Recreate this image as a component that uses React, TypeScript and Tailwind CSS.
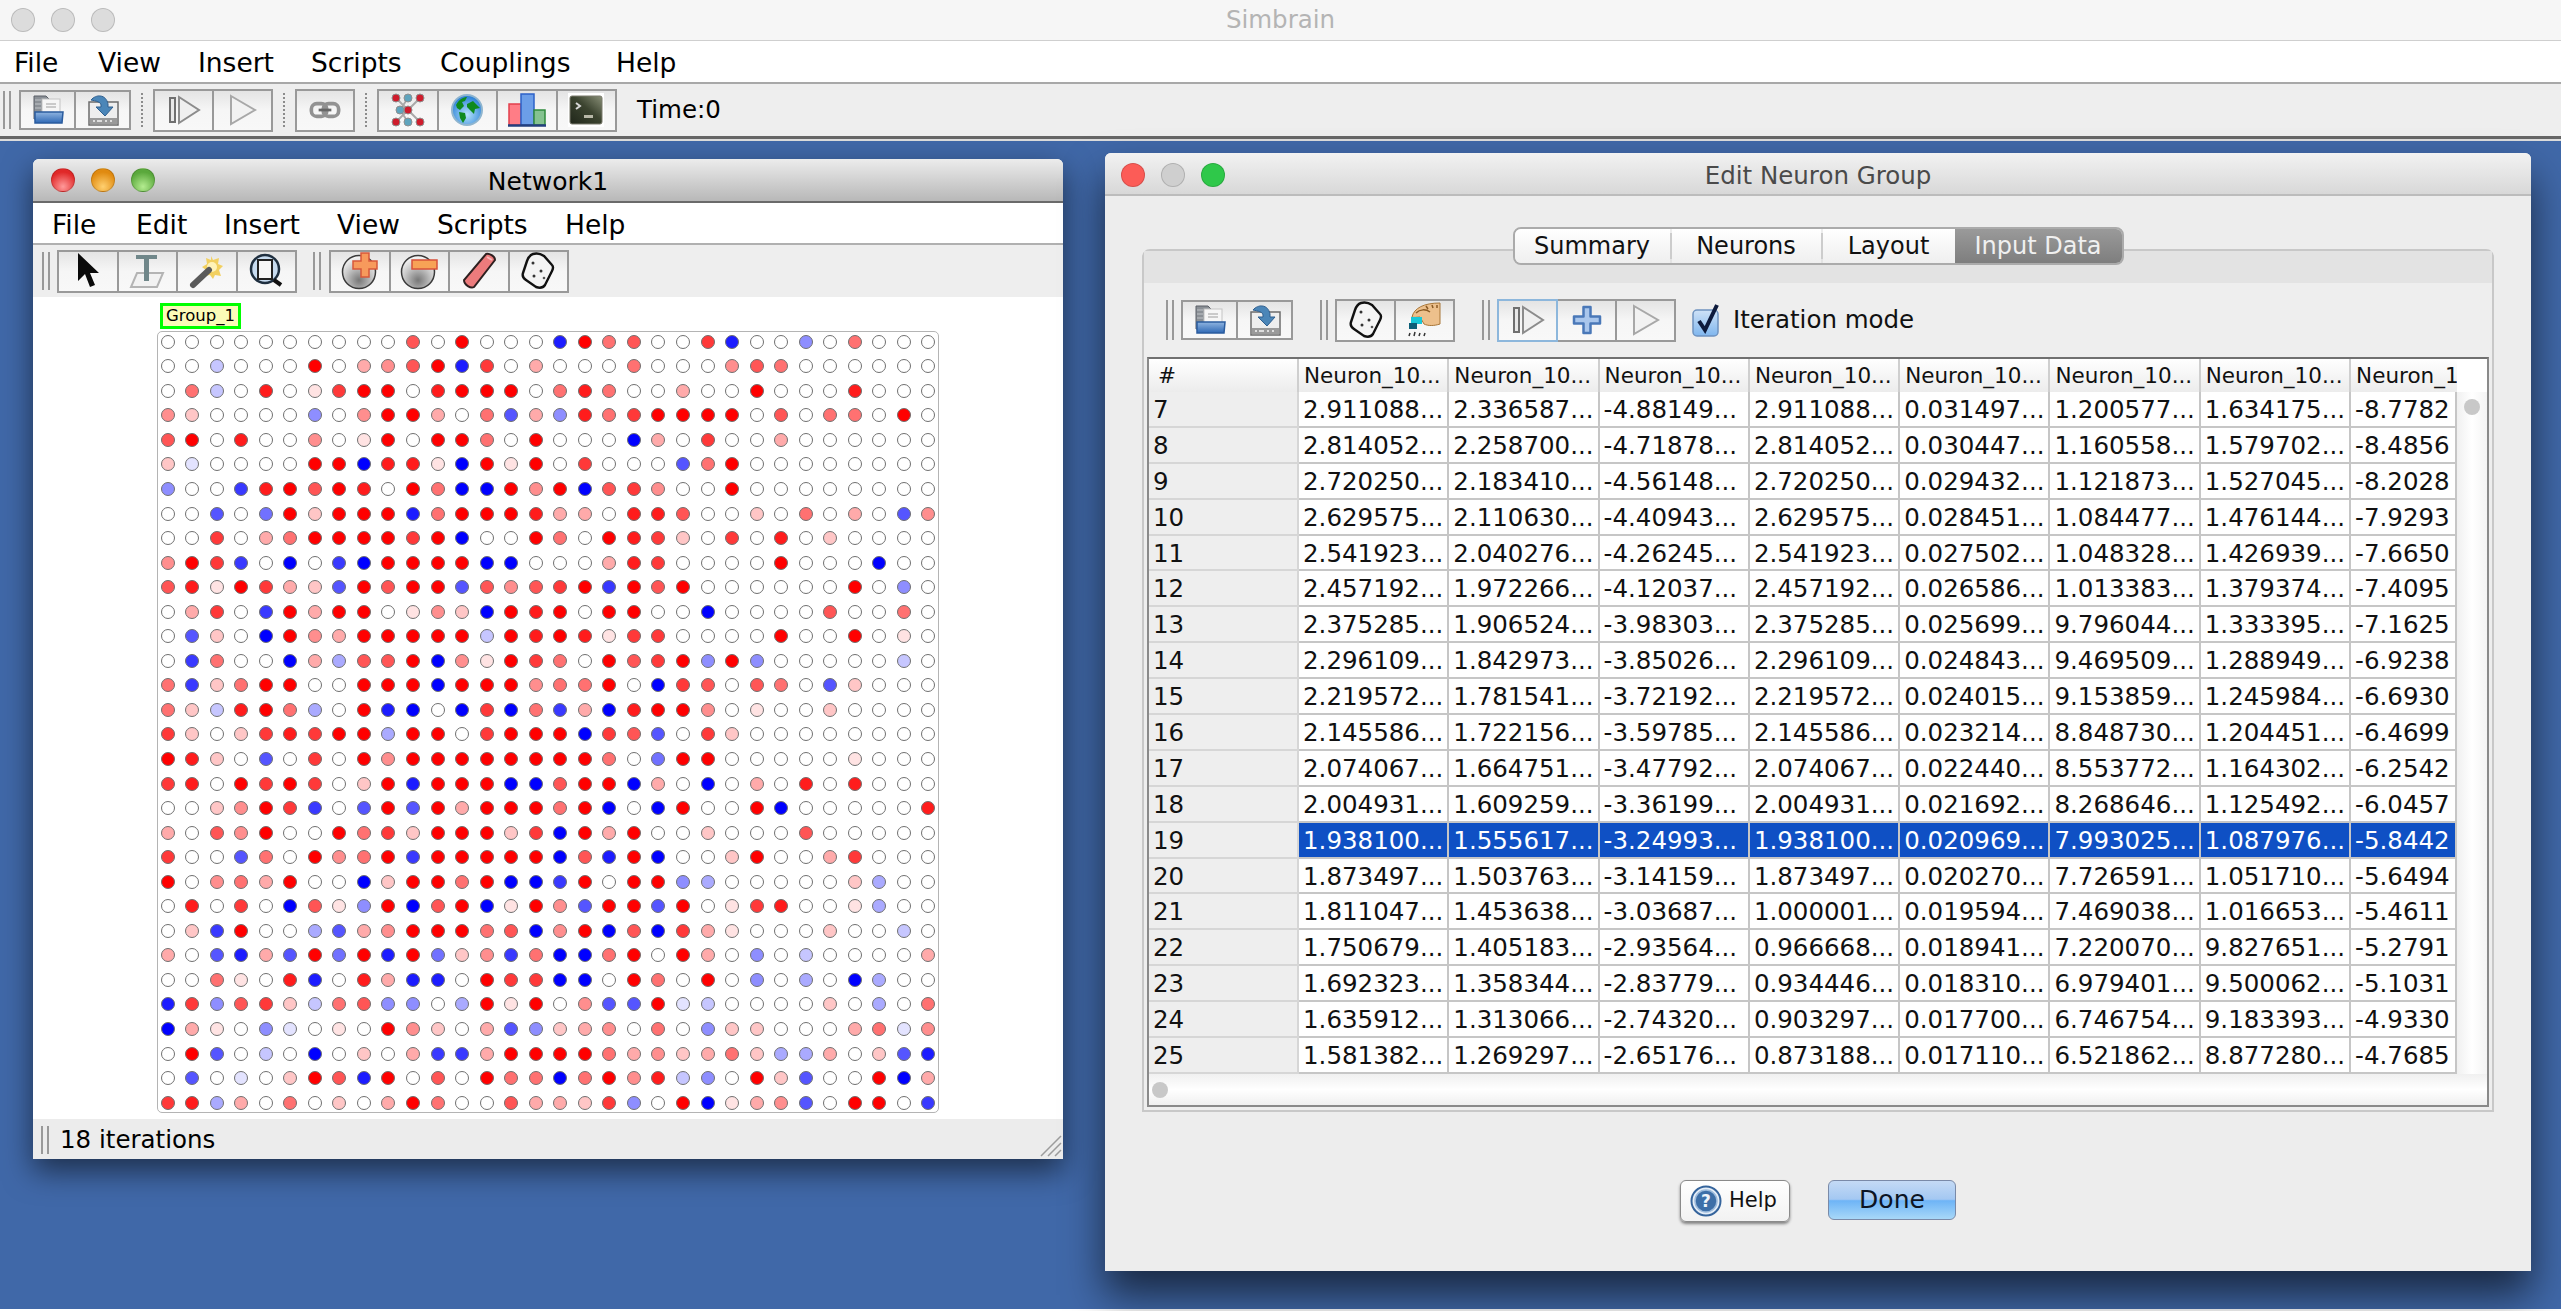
import type { ReactNode } from "react";

const FONT = "font-['DejaVu_Sans',sans-serif]";

const GRID = [
  "0000000000 609000h956 007h00d05000",
  "00b0009034 69h7030005 000465000000",
  "05b0801799 0899905850 030090008000",
  "420000d049 9305f3d857 999906055090",
  "6908004019 099509000i 307003000000",
  "2a000099i8 81i9190700 0f5900000000",
  "d00g896980 95ii949i67 400900000000",
  "00f0e92999 h599983308 8600205030f4",
  "0070359999 79i0095098 720708020000",
  "497g0i0gi9 999ii00038 700009000i00",
  "6819732f96 99f64679g9 6900000090d0",
  "0370g93990 142i989099 00i000060050",
  "0f20i94399 999b989817 700009009010",
  "0g500i3c66 9i41975096 79d9d00000b0",
  "5g25990099 9i99945590 i760650f2000",
  "52b895c09h i0i7i5g3i8 994010020000",
  "720278799c 9907999i76 f07200000000",
  "9820f07094 9999999950 e99000001000",
  "7809797029 h999ii699i 30i030808000",
  "002497g0f9 f9399959i0 i9009i000008",
  "3064900957 299927i939 002000600000",
  "700f509459 g99999i6h9 i00290037000",
  "90453900i2 9959iig909 9dc000002c00",
  "08070i61d9 i69i194f99 f90178001c00",
  "02g900cf34 99956i49i6 i731000200b0",
  "30fh3f9e9h 9e24g5ii59 0930d0b00003",
  "005108h083 hh0977ii09 5090d0c0ic00",
  "h7d672b56d d0c91904ff 9ab000020c05",
  "i310da0109 4203fd2340 50d2200035a4",
  "09f0b0i020 3gg3999953 42352cc302fh",
  "0f0a0296h9 060955i594 8bd092f009i3",
  "78c3050203 950063327d 09i134f0990g",
];

const ROWS: [string, string[]][] = [
  ["7", ["2.911088", "2.336587", "-4.88149", "2.911088", "0.031497", "1.200577", "1.634175", "-8.7782"]],
  ["8", ["2.814052", "2.258700", "-4.71878", "2.814052", "0.030447", "1.160558", "1.579702", "-8.4856"]],
  ["9", ["2.720250", "2.183410", "-4.56148", "2.720250", "0.029432", "1.121873", "1.527045", "-8.2028"]],
  ["10", ["2.629575", "2.110630", "-4.40943", "2.629575", "0.028451", "1.084477", "1.476144", "-7.9293"]],
  ["11", ["2.541923", "2.040276", "-4.26245", "2.541923", "0.027502", "1.048328", "1.426939", "-7.6650"]],
  ["12", ["2.457192", "1.972266", "-4.12037", "2.457192", "0.026586", "1.013383", "1.379374", "-7.4095"]],
  ["13", ["2.375285", "1.906524", "-3.98303", "2.375285", "0.025699", "9.796044", "1.333395", "-7.1625"]],
  ["14", ["2.296109", "1.842973", "-3.85026", "2.296109", "0.024843", "9.469509", "1.288949", "-6.9238"]],
  ["15", ["2.219572", "1.781541", "-3.72192", "2.219572", "0.024015", "9.153859", "1.245984", "-6.6930"]],
  ["16", ["2.145586", "1.722156", "-3.59785", "2.145586", "0.023214", "8.848730", "1.204451", "-6.4699"]],
  ["17", ["2.074067", "1.664751", "-3.47792", "2.074067", "0.022440", "8.553772", "1.164302", "-6.2542"]],
  ["18", ["2.004931", "1.609259", "-3.36199", "2.004931", "0.021692", "8.268646", "1.125492", "-6.0457"]],
  ["19", ["1.938100", "1.555617", "-3.24993", "1.938100", "0.020969", "7.993025", "1.087976", "-5.8442"]],
  ["20", ["1.873497", "1.503763", "-3.14159", "1.873497", "0.020270", "7.726591", "1.051710", "-5.6494"]],
  ["21", ["1.811047", "1.453638", "-3.03687", "1.000001", "0.019594", "7.469038", "1.016653", "-5.4611"]],
  ["22", ["1.750679", "1.405183", "-2.93564", "0.966668", "0.018941", "7.220070", "9.827651", "-5.2791"]],
  ["23", ["1.692323", "1.358344", "-2.83779", "0.934446", "0.018310", "6.979401", "9.500062", "-5.1031"]],
  ["24", ["1.635912", "1.313066", "-2.74320", "0.903297", "0.017700", "6.746754", "9.183393", "-4.9330"]],
  ["25", ["1.581382", "1.269297", "-2.65176", "0.873188", "0.017110", "6.521862", "8.877280", "-4.7685"]],
];

const TABLE_COLS = "grid grid-cols-[150px_repeat(7,150.3px)_106px]";

function dotColor(code: string) {
  if (code === "0") return "#ffffff";
  const isBlue = code >= "a";
  const level = isBlue ? code.charCodeAt(0) - 96 : Number(code);
  const v = Math.round(255 * (1 - level / 9));
  return isBlue ? `rgb(${v},${v},255)` : `rgb(255,${v},${v})`;
}

/* Icons */
function OpenIcon() {
  return (
    <svg width="34" height="32" viewBox="0 0 34 32">
      <defs>
        <linearGradient id="folderFill" x1="0" y1="0" x2="0" y2="1">
          <stop offset="0" stopColor="#8fb4e0" />
          <stop offset="1" stopColor="#2f69b5" />
        </linearGradient>
      </defs>
      <path d="M3 2h12l3 3v20H3z" fill="#8b9096" stroke="#5a5f66" />
      <path d="M4 6h6M4 10h6M4 14h6" stroke="#c0c4c8" />
      <rect x="11" y="5" width="18" height="16" fill="#f6f6f6" stroke="#c4c4c4" />
      <path d="M15 10h10M15 13h10" stroke="#bcbcbc" strokeWidth="1.5" />
      <path d="M4 18h28l-1 11H4z" fill="url(#folderFill)" stroke="#2b5c9e" strokeWidth="1.5" />
    </svg>
  );
}

function SaveIcon() {
  return (
    <svg width="34" height="34" viewBox="0 0 34 34">
      <rect x="3" y="9" width="29" height="23" fill="#eeeeee" stroke="#6c6c6c" strokeWidth="1.5" />
      <rect x="4" y="25" width="27" height="6" fill="#9a9a9a" />
      <path d="M7 28h2M11 28h5M19 28h2M24 28h2" stroke="#dedede" strokeWidth="2" />
      <path d="M5 7C10 1 20 1 22 11v3h5l-8 9-9-9h5v-2C15 9 10 8 5 7z" fill="#4b86b8" stroke="#2f5f8f" />
    </svg>
  );
}

function StepIcon() {
  return (
    <svg width="36" height="32" viewBox="0 0 36 32">
      <rect x="4" y="4" width="5" height="24" fill="#e8e8e8" stroke="#6f6f6f" strokeWidth="2" />
      <path d="M13 3l20 13-20 13z" fill="#f0f0f0" stroke="#8c8c8c" strokeWidth="2" />
    </svg>
  );
}

function PlayIcon() {
  return (
    <svg width="32" height="34" viewBox="0 0 32 34">
      <path d="M4 3l24 14L4 31z" fill="#f2f2f2" stroke="#a8a8a8" strokeWidth="2" />
    </svg>
  );
}

function LinkIcon() {
  return (
    <svg width="32" height="20" viewBox="0 0 34 22">
      <rect x="2" y="4" width="17" height="14" rx="6" fill="none" stroke="#929292" strokeWidth="4" />
      <rect x="15" y="4" width="17" height="14" rx="6" fill="none" stroke="#929292" strokeWidth="4" />
      <path d="M10 11h14" stroke="#666" strokeWidth="3" />
    </svg>
  );
}

function NetIcon() {
  const red = [[6, 5], [30, 5], [18, 17], [6, 29], [30, 29]];
  const teal = [[18, 5], [10, 17], [18, 29]];
  return (
    <svg width="36" height="34" viewBox="0 0 36 34">
      <path d="M6 5L30 29M30 5L6 29M18 5L10 17L18 29" stroke="#a9a9a9" strokeWidth="2" fill="none" />
      {red.map(([x, y]) => (
        <circle key={`${x}-${y}`} cx={x} cy={y} r="4" fill="#cf1c2c" stroke="#8f8f8f" />
      ))}
      {teal.map(([x, y]) => (
        <circle key={`${x}-${y}`} cx={x} cy={y} r="4" fill="#5fa4bd" stroke="#8f8f8f" />
      ))}
    </svg>
  );
}

function GlobeIcon() {
  return (
    <svg width="34" height="36" viewBox="0 0 34 36">
      <defs>
        <radialGradient id="globeSea" cx="0.5" cy="0.65" r="0.6">
          <stop offset="0" stopColor="#b4e2fb" />
          <stop offset="1" stopColor="#2d82d8" />
        </radialGradient>
      </defs>
      <circle cx="17" cy="18" r="15" fill="url(#globeSea)" stroke="#8fb5cf" strokeWidth="2" />
      <path d="M6 13c3-6 8-8 11-8l-2 4-3 1 2 4-4 4-3-2zM17 12l6-3 5 5 2 2-5 1-1 5-4-4-3-3zM9 20l6 1 1 5-3 5-3-5z" fill="#0e8a1e" />
    </svg>
  );
}

function BarsIcon() {
  return (
    <svg width="38" height="34" viewBox="0 0 38 34">
      <rect x="1" y="11" width="12" height="21" fill="#ff7d86" stroke="#e23f4c" strokeWidth="1.5" />
      <rect x="13" y="1" width="13" height="31" fill="#6c9ee8" stroke="#2d62c8" strokeWidth="1.5" />
      <rect x="26" y="17" width="11" height="15" fill="#85c290" stroke="#2f8a3c" strokeWidth="1.5" />
      <path d="M0 32.5h38" stroke="#24407e" strokeWidth="2.5" />
    </svg>
  );
}

function TermIcon() {
  return (
    <svg width="36" height="34" viewBox="0 0 36 34">
      <defs>
        <linearGradient id="termFill" x1="0" y1="1" x2="1" y2="0">
          <stop offset="0" stopColor="#20261a" />
          <stop offset="0.55" stopColor="#3c4430" />
          <stop offset="1" stopColor="#8a9078" />
        </linearGradient>
      </defs>
      <rect x="0" y="0" width="36" height="34" fill="#ffffff" />
      <rect x="2" y="3" width="32" height="28" rx="2" fill="url(#termFill)" stroke="#7a7a6c" />
      <path d="M8 10l4 3-4 3" fill="none" stroke="#d8d8d8" strokeWidth="2" />
      <rect x="16" y="22" width="9" height="3" fill="#b8b8a8" />
    </svg>
  );
}

function ArrowIcon() {
  return (
    <svg width="24" height="38" viewBox="0 0 24 38">
      <path d="M2 1v28l7-7 5 13 5-2-5-12h9z" fill="#0a0a0a" />
    </svg>
  );
}

function TextIcon() {
  return (
    <svg width="36" height="36" viewBox="0 0 36 36">
      <path d="M8 20h26l-6 14H2z" fill="#f2f2f2" stroke="#b4b4b4" strokeWidth="2" />
      <path d="M7 2h21v4h-8v22h-5V6H7z" fill="#70878a" />
    </svg>
  );
}

function WandIcon() {
  return (
    <svg width="36" height="36" viewBox="0 0 36 36">
      <path d="M22 3l2 4 6-2-1 6 5 2-4 4 2 6-6-1-2 4-3-4-6 1 2-6-4-3 5-3-1-6 5 2z" fill="#f2d060" />
      <circle cx="23" cy="14" r="5" fill="#fff3b8" />
      <path d="M4 32L20 17" stroke="#5a5a5a" strokeWidth="6" strokeLinecap="round" />
    </svg>
  );
}

function ZoomIcon() {
  return (
    <svg width="34" height="36" viewBox="0 0 34 36">
      <circle cx="16" cy="16" r="14" fill="#c8dcf0" stroke="#1f2f3f" strokeWidth="2.5" />
      <rect x="9" y="7" width="14" height="19" fill="#f7f7f7" stroke="#222" strokeWidth="2" />
      <path d="M25 27l7 5" stroke="#111" strokeWidth="4" />
    </svg>
  );
}

function NeuronBall({ id, children }: { id: string; children: ReactNode }) {
  return (
    <svg width="38" height="38" viewBox="0 0 38 38">
      <defs>
        <radialGradient id={id} cx="0.5" cy="0.75" r="0.7">
          <stop offset="0" stopColor="#777777" />
          <stop offset="0.6" stopColor="#c8c8c8" />
          <stop offset="1" stopColor="#f4f4f4" />
        </radialGradient>
      </defs>
      <circle cx="18" cy="20" r="16.5" fill={`url(#${id})`} stroke="#3a3a3a" strokeWidth="1.5" />
      {children}
    </svg>
  );
}

function AddNeuronIcon() {
  return (
    <NeuronBall id="ballAdd">
      <path d="M20 1h8v8h8v8h-8v8h-8v-8h-8V9h8z" fill="#f79a5c" stroke="#d8583a" strokeWidth="1.5" />
    </NeuronBall>
  );
}

function RemoveNeuronIcon() {
  return (
    <NeuronBall id="ballRemove">
      <rect x="12" y="8" width="25" height="9" fill="#f7a256" stroke="#d8503a" strokeWidth="1.5" />
    </NeuronBall>
  );
}

function EraserIcon() {
  return (
    <svg width="36" height="38" viewBox="0 0 36 38">
      <path d="M25 2c3-1 9 2 9 6L13 35c-3 2-10-2-10-7z" fill="#ec7b7c" stroke="#2e2020" strokeWidth="2" />
      <path d="M26 5l5 3" stroke="#f7b7b7" strokeWidth="2" />
    </svg>
  );
}

function DiceIcon() {
  return (
    <svg width="36" height="38" viewBox="0 0 36 38">
      <path d="M13 2c4-1 8 0 11 2l8 9c2 2 1 4 0 6l-7 14c-2 3-6 3-9 2L6 28c-3-2-4-4-3-7l4-12c1-3 3-6 6-7z" fill="#f4f4f4" stroke="#111" strokeWidth="2.4" />
      <circle cx="13" cy="11" r="1.5" fill="#333" />
      <circle cx="21" cy="19" r="1.5" fill="#333" />
      <circle cx="14" cy="24" r="1.5" fill="#333" />
      <circle cx="24" cy="26" r="1.3" fill="#555" />
    </svg>
  );
}

function HandIcon() {
  return (
    <svg width="38" height="36" viewBox="0 0 38 36">
      <path d="M6 15C8 6 18 1 34 1v21c-6 2-12 2-16 0l-4-7c-3 0-6 1-8 0z" fill="#edc08c" stroke="#a87638" />
      <path d="M10 11c4-4 10-4 14-1M20 4l2 3M26 3l1 3M31 3v3" stroke="#8a5a24" strokeWidth="1.5" fill="none" />
      <rect x="5" y="15" width="11" height="7" fill="#18c8d8" />
      <rect x="3" y="21" width="8" height="6" fill="#0d5f78" />
      <path d="M3 34l1-3M8 34l1-4M13 34l1-3M18 34l1-3" stroke="#333" strokeWidth="1.5" />
    </svg>
  );
}

function PlusIcon() {
  return (
    <svg width="30" height="30" viewBox="0 0 30 30">
      <path d="M11.5 2h7v9.5H28v7h-9.5V28h-7v-9.5H2v-7h9.5z" fill="#a9c6ec" stroke="#4a78b8" strokeWidth="2.5" strokeLinejoin="round" />
    </svg>
  );
}

function HelpIcon() {
  return (
    <svg width="32" height="32" viewBox="0 0 32 32">
      <circle cx="16" cy="16" r="14.5" fill="#e4edf7" stroke="#35649c" strokeWidth="2" />
      <circle cx="16" cy="16" r="11" fill="#3d6fa8" stroke="#9dbbdc" strokeWidth="1.5" />
      <text x="16" y="22" textAnchor="middle" fontSize="17" fontWeight="700" fill="#f0f4fa" fontFamily="DejaVu Sans">?</text>
    </svg>
  );
}

/* Toolbar pieces */
function Grip({ h = "h-[38px]" }: { h?: string }) {
  return (
    <div className={`flex ${h} w-[8px] shrink-0 justify-between`}>
      <div className="w-[2px] bg-[#999999]" />
      <div className="w-[2px] bg-[#999999]" />
    </div>
  );
}

function DottedSep() {
  return <div className="h-[34px] w-0 shrink-0 border-l-[2px] border-dotted border-[#8c8c8c]" />;
}

function ToolGroup({ children, h = "h-[43px]" }: { children: ReactNode; h?: string }) {
  return <div className={`flex ${h} shrink-0 gap-[2px] border-[2px] border-[#999999] bg-[#999999]`}>{children}</div>;
}

function ToolBtn({ children, w = "w-[57.5px]", active }: { children: ReactNode; w?: string; active?: boolean }) {
  return (
    <div
      className={`flex ${w} items-center justify-center overflow-hidden bg-gradient-to-b from-[#e4e4e4] via-[#f6f6f6] to-[#f8f8f8] ${
        active ? "outline-[2px] outline-[#8db7dc]" : ""
      }`}
    >
      {children}
    </div>
  );
}

function Lights({ kind }: { kind: "off" | "glossy" | "flat" }) {
  const colors =
    kind === "off"
      ? ["bg-[#dcdcdc]", "bg-[#dcdcdc]", "bg-[#dcdcdc]"]
      : kind === "flat"
        ? ["bg-[#fc5c57]", "bg-[#cfcfcf]", "bg-[#2fc84a]"]
        : [
            "bg-[radial-gradient(circle_at_50%_80%,#ff9a9a,#e02828_70%)]",
            "bg-[radial-gradient(circle_at_50%_80%,#ffd070,#e08a10_70%)]",
            "bg-[radial-gradient(circle_at_50%_80%,#b4ec90,#5aa83c_70%)]",
          ];
  return (
    <div className="flex gap-[16px]">
      {colors.map((c, i) => (
        <div key={i} className={`h-[24px] w-[24px] rounded-full border border-black/15 ${c}`} />
      ))}
    </div>
  );
}

function TableCell({ text, selected }: { text: string; selected: boolean }) {
  return (
    <div
      className={`overflow-hidden whitespace-nowrap border-r-[2px] border-b-[2px] border-[#c6c6c6] pl-[4px] leading-[36.5px] ${
        selected ? "bg-[#0f50c4] text-white" : "bg-white text-[#111111]"
      }`}
    >
      {text}
    </div>
  );
}

function NetworkWindow() {
  return (
    <div className="absolute left-[33px] top-[159px] flex h-[1000px] w-[1030px] flex-col overflow-hidden rounded-t-[6px] bg-white shadow-[0_12px_30px_rgba(0,0,0,0.55)]">
      <div className="relative flex h-[44px] shrink-0 items-center border-b-[2px] border-[#6a6a6a] bg-gradient-to-b from-[#ececec] to-[#b8b8b8] pl-[18px]">
        <Lights kind="glossy" />
        <div className="absolute inset-x-0 translate-y-[2px] text-center text-[25px] text-black">Network1</div>
      </div>
      <div className="flex h-[42px] shrink-0 items-center border-b-[2px] border-[#b0b0b0] pl-[19px] pt-[3px] text-[26.5px] text-black">
        <span className="w-[84px]">File</span>
        <span className="w-[88px]">Edit</span>
        <span className="w-[113px]">Insert</span>
        <span className="w-[100px]">View</span>
        <span className="w-[128px]">Scripts</span>
        <span>Help</span>
      </div>
      <div className="flex h-[52px] shrink-0 items-center bg-[#eeeeee] pl-[9px]">
        <Grip />
        <div className="ml-[7px]">
          <ToolGroup>
            <ToolBtn><ArrowIcon /></ToolBtn>
            <ToolBtn><TextIcon /></ToolBtn>
            <ToolBtn><WandIcon /></ToolBtn>
            <ToolBtn><ZoomIcon /></ToolBtn>
          </ToolGroup>
        </div>
        <div className="ml-[16px]"><Grip /></div>
        <div className="ml-[8px]">
          <ToolGroup>
            <ToolBtn><AddNeuronIcon /></ToolBtn>
            <ToolBtn><RemoveNeuronIcon /></ToolBtn>
            <ToolBtn><EraserIcon /></ToolBtn>
            <ToolBtn><DiceIcon /></ToolBtn>
          </ToolGroup>
        </div>
      </div>
      <div className="flex min-h-0 flex-1 flex-col items-start pl-[124px] pt-[6px]">
        <div className="ml-[3px] flex h-[26px] w-[81px] items-center justify-center border-[3px] border-[#00ff00] bg-[#fbfbb8] text-[16.5px] text-black">
          Group_1
        </div>
        <div className="mt-[2px] flex h-[782px] w-[782px] flex-col gap-y-[10.56px] rounded-[5px] border border-[#b4b4b4] pl-[2.5px] pt-[2.7px]">
          {GRID.map((row, r) => (
            <div key={r} className="flex gap-x-[10.55px]">
              {row.replaceAll(" ", "").split("").map((code, c) => (
                <div
                  key={c}
                  className="h-[14px] w-[14px] shrink-0 rounded-full border border-[#707070]"
                  style={{ backgroundColor: dotColor(code) }}
                />
              ))}
            </div>
          ))}
        </div>
      </div>
      <div className="relative flex h-[40px] shrink-0 items-center bg-[#ececec] pl-[8px] pt-[2px] text-[24.5px] text-black">
        <Grip h="h-[28px]" />
        <span className="ml-[11px]">18 iterations</span>
        <svg className="absolute bottom-[2px] right-[1px]" width="22" height="22" viewBox="0 0 22 22">
          <path d="M1 21L21 1M8 21L21 8M15 21L21 15" stroke="#9c9c9c" strokeWidth="1.5" />
        </svg>
      </div>
    </div>
  );
}

function NeuronTable() {
  return (
    <div className="mx-[3px] flex h-[750px] flex-col border-[2px] border-[#8a8a8a] border-t-[#707070] bg-white text-[24.5px]">
      <div className={`${TABLE_COLS} h-[33px] shrink-0 text-[21.5px] text-[#111111]`}>
        <div className="border-r-[2px] border-[#cfcfcf] bg-gradient-to-b from-white to-[#ececec] pl-[9px] leading-[33px]">#</div>
        {[0, 1, 2, 3, 4, 5, 6, 7].map((i) => (
          <div
            key={i}
            className="overflow-hidden whitespace-nowrap border-r-[2px] border-[#cfcfcf] bg-gradient-to-b from-white to-[#ececec] pl-[5px] leading-[33px] last:border-r-0"
          >
            {i === 7 ? "Neuron_1" : "Neuron_10..."}
          </div>
        ))}
      </div>
      <div className="flex min-h-0 flex-1">
        <div className="w-[1308px] shrink-0">
          {ROWS.map(([id, cells]) => {
            const selected = id === "19";
            return (
              <div key={id} className={`${TABLE_COLS} h-[35.9px]`}>
                <div className="overflow-hidden border-r-[2px] border-b-[2px] border-[#d6d6d6] bg-[#eeeeee] pl-[4px] leading-[36.5px] text-[#111111]">
                  {id}
                </div>
                {cells.map((v, i) => (
                  <TableCell key={i} text={i < 7 ? `${v}...` : v} selected={selected} />
                ))}
              </div>
            );
          })}
        </div>
        <div className="flex flex-1 justify-center bg-gradient-to-r from-[#f0f0f0] via-white to-[#f4f4f4] pt-[7px]">
          <div className="h-[16px] w-[16px] rounded-full bg-[#c8c8c8]" />
        </div>
      </div>
      <div className="flex h-[31px] shrink-0 items-center bg-gradient-to-b from-[#f0f0f0] via-white to-[#f0f0f0] pl-[3px]">
        <div className="h-[16px] w-[16px] rounded-full bg-[#c8c8c8]" />
      </div>
    </div>
  );
}

function EditWindow() {
  return (
    <div className="absolute left-[1105px] top-[153px] flex h-[1118px] w-[1426px] flex-col overflow-hidden rounded-t-[6px] bg-[#ededed] shadow-[0_24px_40px_rgba(0,0,0,0.6)]">
      <div className="relative flex h-[43px] shrink-0 items-center border-b-[2px] border-[#bcbcbc] bg-gradient-to-b from-[#f2f2f2] to-[#d8d8d8] pl-[16px] pt-[2px]">
        <Lights kind="flat" />
        <div className="absolute inset-x-0 translate-y-[2px] text-center text-[24.5px] text-[#4a4a4a]">Edit Neuron Group</div>
      </div>
      <div className="relative z-10 mt-[31px] flex h-[38px] w-[611px] shrink-0 self-center overflow-hidden rounded-[8px] border-[2px] border-[#ababab] text-[24px]">
        <div className="flex w-[155px] items-center justify-center bg-gradient-to-b from-white to-[#efefef] text-[#111111]">Summary</div>
        <div className="my-[4px] w-[2px] bg-[#cccccc]" />
        <div className="flex w-[149px] items-center justify-center bg-gradient-to-b from-white to-[#efefef] text-[#111111]">Neurons</div>
        <div className="my-[4px] w-[2px] bg-[#cccccc]" />
        <div className="flex w-[132px] items-center justify-center bg-gradient-to-b from-white to-[#efefef] text-[#111111]">Layout</div>
        <div className="flex flex-1 items-center justify-center bg-gradient-to-b from-[#9a9a9a] to-[#7e7e7e] text-[#f0f0f0]">Input Data</div>
      </div>
      <div className="mx-[37px] -mt-[16px] flex h-[863px] shrink-0 flex-col rounded-t-[8px] border-[2px] border-[#c8c8c8] bg-[#eeeeee]">
        <div className="h-[32px] shrink-0 bg-[#e3e3e3]" />
        <div className="flex h-[74px] shrink-0 items-center pl-[22px]">
          <Grip h="h-[40px]" />
          <div className="ml-[7px]">
            <ToolGroup h="h-[40px]">
              <ToolBtn w="w-[53px]"><OpenIcon /></ToolBtn>
              <ToolBtn w="w-[53px]"><SaveIcon /></ToolBtn>
            </ToolGroup>
          </div>
          <div className="ml-[27px]"><Grip h="h-[40px]" /></div>
          <div className="ml-[7px]">
            <ToolGroup>
              <ToolBtn w="w-[57px]"><DiceIcon /></ToolBtn>
              <ToolBtn w="w-[57px]"><HandIcon /></ToolBtn>
            </ToolGroup>
          </div>
          <div className="ml-[27px]"><Grip h="h-[40px]" /></div>
          <div className="ml-[7px]">
            <ToolGroup>
              <ToolBtn w="w-[57px]" active><StepIcon /></ToolBtn>
              <ToolBtn w="w-[57px]"><PlusIcon /></ToolBtn>
              <ToolBtn w="w-[57px]"><PlayIcon /></ToolBtn>
            </ToolGroup>
          </div>
          <svg className="ml-[16px]" width="28" height="34" viewBox="0 0 28 34">
            <defs>
              <linearGradient id="checkFill" x1="0" y1="0" x2="0" y2="1">
                <stop offset="0" stopColor="#cfe2f7" />
                <stop offset="1" stopColor="#7fb6ee" />
              </linearGradient>
            </defs>
            <rect x="1" y="7" width="25" height="26" rx="4" fill="url(#checkFill)" stroke="#6f93c0" strokeWidth="1.5" />
            <path d="M7 18l6 9L25 2" fill="none" stroke="#0d1a3c" strokeWidth="4" />
          </svg>
          <span className="ml-[13px] text-[24.5px] text-[#111111]">Iteration mode</span>
        </div>
        <NeuronTable />
      </div>
      <div className="mt-[68px] flex shrink-0 justify-center gap-[38px]">
        <div className="flex h-[42px] w-[110px] items-center rounded-[6px] border border-[#8a8a8a] bg-gradient-to-b from-white to-[#f2f2f2] pl-[9px] shadow-[0_2px_3px_rgba(0,0,0,0.45)]">
          <HelpIcon />
          <span className="ml-[7px] text-[21px] text-[#111111]">Help</span>
        </div>
        <div className="flex h-[40px] w-[128px] items-center justify-center rounded-[6px] border border-[#7a8aa8] bg-[linear-gradient(#c4daf5,#a4c8f2_48%,#6eb4f6_52%,#a8d8f8)] text-[25px] text-[#0c1424]">
          Done
        </div>
      </div>
    </div>
  );
}

export default function App() {
  return (
    <div className={`flex h-[1311px] w-[2561px] flex-col overflow-hidden bg-white ${FONT}`}>
      {/* Main window chrome */}
      <div className="relative flex h-[41px] shrink-0 items-center border-b-[1px] border-[#cfcfcf] bg-[#f6f6f6] pl-[11px]">
        <Lights kind="off" />
        <div className="absolute inset-x-0 text-center text-[24.5px] text-[#b4b4b4]">Simbrain</div>
      </div>
      <div className="flex h-[43px] shrink-0 items-center border-b-[2px] border-[#a8a8a8] bg-white pl-[14px] pt-[3px] text-[26.5px] text-black">
        <span className="w-[84px]">File</span>
        <span className="w-[100px]">View</span>
        <span className="w-[113px]">Insert</span>
        <span className="w-[129px]">Scripts</span>
        <span className="w-[176px]">Couplings</span>
        <span>Help</span>
      </div>
      <div className="flex h-[55px] shrink-0 items-center border-b-[3px] border-[#666666] bg-[#eeeeee] pl-[3px]">
        <Grip h="h-[38px]" />
        <div className="ml-[8px]">
          <ToolGroup h="h-[40px]">
            <ToolBtn w="w-[53px]"><OpenIcon /></ToolBtn>
            <ToolBtn w="w-[53px]"><SaveIcon /></ToolBtn>
          </ToolGroup>
        </div>
        <div className="ml-[10px]"><DottedSep /></div>
        <div className="ml-[10px]">
          <ToolGroup>
            <ToolBtn w="w-[57px]"><StepIcon /></ToolBtn>
            <ToolBtn w="w-[57px]"><PlayIcon /></ToolBtn>
          </ToolGroup>
        </div>
        <div className="ml-[10px]"><DottedSep /></div>
        <div className="ml-[10px]">
          <ToolGroup>
            <ToolBtn w="w-[56px]"><LinkIcon /></ToolBtn>
          </ToolGroup>
        </div>
        <div className="ml-[10px]"><DottedSep /></div>
        <div className="ml-[10px]">
          <ToolGroup>
            <ToolBtn><NetIcon /></ToolBtn>
            <ToolBtn><GlobeIcon /></ToolBtn>
            <ToolBtn><BarsIcon /></ToolBtn>
            <ToolBtn><TermIcon /></ToolBtn>
          </ToolGroup>
        </div>
        <span className="ml-[20px] text-[24.5px] text-black">Time:0</span>
      </div>
      <div className="h-[2px] shrink-0 bg-[#dcdcdc]" />
      {/* Desktop */}
      <div className="relative h-[1168px] shrink-0 bg-[#4068a8]" />
      <NetworkWindow />
      <EditWindow />
    </div>
  );
}
